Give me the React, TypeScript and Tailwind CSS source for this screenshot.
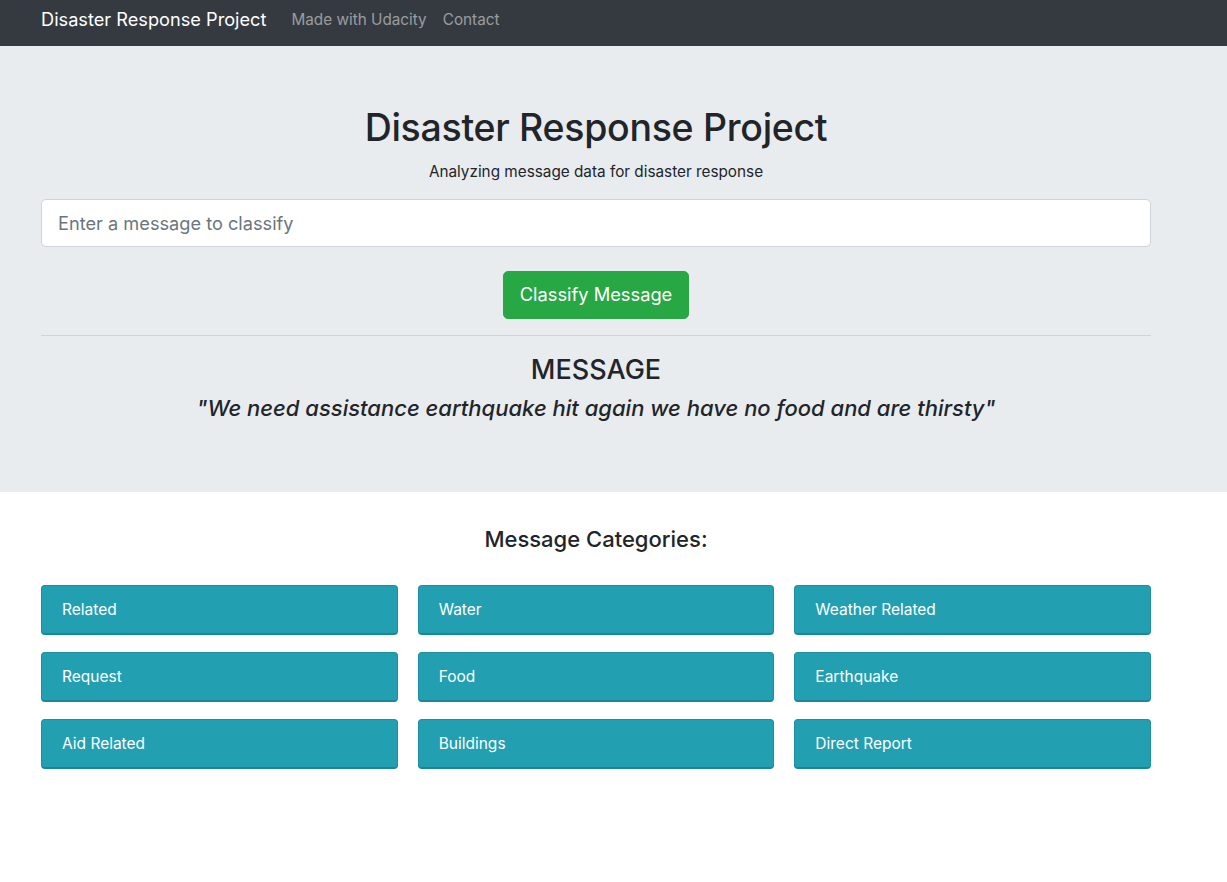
import React from 'react'

const categories = [
  'Related', 'Water', 'Weather Related',
  'Request', 'Food', 'Earthquake',
  'Aid Related', 'Buildings', 'Direct Report',
]

export default function App() {
  return (
    <div className="min-h-[882px] bg-white text-[#212529] font-['Inter','Liberation_Sans',sans-serif]">
      {/* Navbar */}
      <nav className="h-[46px] bg-[#343a40] flex items-center pb-[6px]">
        <div className="ml-[41px] flex items-center">
          <span className="text-white text-[18.2px] mr-[25px]">Disaster Response Project</span>
          <a className="text-white/50 text-[15.3px] mr-[16px]">Made with Udacity</a>
          <a className="text-white/50 text-[15.3px]">Contact</a>
        </div>
      </nav>

      {/* Jumbotron */}
      <div className="bg-[#e9ecef] h-[446px] pt-[58px]">
        <div className="ml-[41px] w-[1110px] flex flex-col items-center">
          <h1 className="text-[37.5px] leading-[48px] font-medium tracking-[-0.3px]">Disaster Response Project</h1>
          <p className="text-[15.3px] leading-[24px] mt-[8px]">Analyzing message data for disaster response</p>
          <input
            className="mt-[15px] w-full h-[48px] bg-white border border-[#ced4da] rounded-[5px] px-[16px] text-[18.2px] placeholder:text-[#6c757d] outline-none"
            placeholder="Enter a message to classify"
          />
          <button className="mt-[24px] h-[48px] px-[16px] bg-[#28a745] text-white text-[18.3px] rounded-[5px] border border-[#28a745]">
            Classify Message
          </button>
          <hr className="w-full mt-[16px] border-t border-black/10" />
          <h3 className="mt-[17px] text-[27px] leading-[34px] font-medium">MESSAGE</h3>
          <h4 className="mt-[7px] text-[22px] leading-[29px] italic font-medium">
            "We need assistance earthquake hit again we have no food and are thirsty"
          </h4>
        </div>
      </div>

      {/* Categories */}
      <div className="ml-[41px] w-[1110px] pt-[33px]">
        <h4 className="text-center text-[22px] leading-[29px] font-medium">Message Categories:</h4>
        <div className="grid grid-cols-3 gap-x-[20px] gap-y-[17px] mt-[31px]">
          {categories.map((c) => (
            <div
              key={c}
              className="h-[50px] bg-[#22a0b2] border border-[#1d8f9f] border-b-2 border-b-[#1a8796] rounded-[4px] text-white text-[15.5px] flex items-center px-[20px]"
            >
              {c}
            </div>
          ))}
        </div>
      </div>
    </div>
  )
}
